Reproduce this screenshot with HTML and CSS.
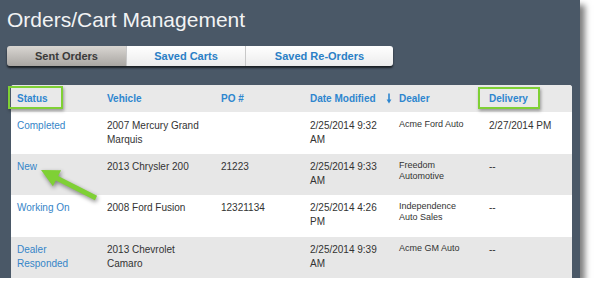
FILE: index.html
```html
<!DOCTYPE html>
<html>
<head>
<meta charset="utf-8">
<link rel="stylesheet" href="styles.css">
</head>
<body>
<div class="shot">
  <h1 class="title">Orders/Cart Management</h1>
  <div class="tabs">
    <div class="tab tab-active">Sent Orders</div>
    <div class="tab tab-mid">Saved Carts</div>
    <div class="tab tab-wide">Saved Re-Orders</div>
  </div>
  <div class="card">
    <table class="grid">
      <colgroup>
        <col class="c1"><col class="c2"><col class="c3"><col class="c4"><col class="c5"><col class="c6">
      </colgroup>
      <thead>
        <tr>
          <th>Status</th>
          <th>Vehicle</th>
          <th>PO #</th>
          <th>Date Modified<svg class="sort" width="6" height="11" viewBox="0 0 6 11"><path d="M3 0.5V9" stroke="#2e86cf" stroke-width="1.6"/><path d="M0.6 6.5L3 10.5L5.4 6.5Z" fill="#2e86cf"/></svg></th>
          <th>Dealer</th>
          <th>Delivery</th>
        </tr>
      </thead>
      <tbody>
        <tr class="r-white">
          <td class="st">Completed</td>
          <td>2007 Mercury Grand Marquis</td>
          <td></td>
          <td>2/25/2014 9:32<br>AM</td>
          <td class="dl">Acme Ford Auto</td>
          <td>2/27/2014 PM</td>
        </tr>
        <tr class="r-gray">
          <td class="st">New</td>
          <td>2013 Chrysler 200</td>
          <td>21223</td>
          <td>2/25/2014 9:33<br>AM</td>
          <td class="dl">Freedom<br>Automotive</td>
          <td>--</td>
        </tr>
        <tr class="r-white">
          <td class="st">Working On</td>
          <td>2008 Ford Fusion</td>
          <td>12321134</td>
          <td>2/25/2014 4:26<br>PM</td>
          <td class="dl">Independence<br>Auto Sales</td>
          <td>--</td>
        </tr>
        <tr class="r-gray">
          <td class="st">Dealer<br>Responded</td>
          <td>2013 Chevrolet<br>Camaro</td>
          <td></td>
          <td>2/25/2014 9:39<br>AM</td>
          <td class="dl">Acme GM Auto</td>
          <td>--</td>
        </tr>
      </tbody>
    </table>
  </div>
  <div class="hl hl-status"></div>
  <div class="hl hl-delivery"></div>
  <svg class="arrow" width="110" height="50" viewBox="0 0 110 50">
    <polygon points="1,0 21.1,0.2 18.1,6 57.1,25.8 54.9,30.2 15.9,10.4 12.9,16.2" fill="#7fd035"/>
  </svg>
</div>
</body>
</html>
```

FILE: styles.css
```css
html, body {
  margin: 0;
  padding: 0;
  background: #ffffff;
}

.shot {
  position: relative;
  width: 580px;
  height: 278px;
  box-sizing: border-box;
  padding-left: 7px;
  background: #4a5867;
  box-shadow: 5px 5px 6px rgba(0, 0, 0, 0.5);
  font-family: "Liberation Sans", Arial, sans-serif;
}

.title {
  margin: 0;
  padding-top: 8px;
  font-size: 21px;
  line-height: 24px;
  font-weight: normal;
  color: #f2f3f4;
  letter-spacing: 0;
}

.tabs {
  display: flex;
  margin-top: 14px;
  width: 386px;
  height: 20px;
  border-radius: 3px;
  box-shadow: 0 2px 2px rgba(0, 0, 0, 0.65);
}

.tab {
  display: flex;
  align-items: center;
  justify-content: center;
  height: 20px;
  box-sizing: border-box;
  font-size: 11px;
  font-weight: bold;
  color: #2a7fc6;
  background: linear-gradient(#ffffff, #ececec);
  border-left: 1px solid #c8c8c8;
}

.tab-active {
  width: 119px;
  color: #3a3a3a;
  background: linear-gradient(#d9d6d2, #a9a6a2);
  border-left: none;
  border-radius: 3px 0 0 3px;
}

.tab-mid {
  width: 119px;
}

.tab-wide {
  width: 148px;
  border-radius: 0 3px 3px 0;
}

.card {
  margin-top: 19px;
  margin-left: 4px;
  width: 561px;
  background: #ffffff;
  border-radius: 3px 3px 0 0;
  overflow: hidden;
}

.grid {
  width: 561px;
  border-collapse: collapse;
  table-layout: fixed;
  font-size: 10px;
  color: #333333;
}

.c1 { width: 90px; }
.c2 { width: 114px; }
.c3 { width: 89px; }
.c4 { width: 89px; }
.c5 { width: 90px; }
.c6 { width: 89px; }

.grid th {
  height: 27px;
  padding: 0 0 0 6px;
  text-align: left;
  vertical-align: middle;
  font-weight: bold;
  color: #2e86cf;
  background: #e9e9e9;
  border-bottom: 1px solid #ffffff;
  box-sizing: border-box;
}

.sort {
  margin-left: 10px;
  vertical-align: -2px;
}

.grid td {
  padding: 6px 0 0 6px;
  vertical-align: top;
  line-height: 14px;
}

.r-white td { background: #ffffff; }
.r-gray td { background: #e7e7e7; }

.r-white:nth-child(1) td { height: 42px; box-sizing: border-box; }
.r-gray td { height: 41px; box-sizing: border-box; }
.r-white td { height: 42px; box-sizing: border-box; }

.grid td.st {
  color: #3585c8;
}

.grid td.dl {
  font-size: 9px;
  line-height: 11px;
  padding-top: 6px;
  color: #333333;
}

.hl {
  position: absolute;
  border: 2px solid #7fd035;
  box-shadow: 1px 2px 3px rgba(0, 0, 0, 0.35);
}

.hl-status {
  left: 8px;
  top: 86px;
  width: 51px;
  height: 19px;
}

.hl-delivery {
  left: 478px;
  top: 87px;
  width: 58px;
  height: 18px;
}

.arrow {
  position: absolute;
  left: 40px;
  top: 170px;
  overflow: visible;
  filter: drop-shadow(1px 2px 2px rgba(0, 0, 0, 0.45));
}
```
